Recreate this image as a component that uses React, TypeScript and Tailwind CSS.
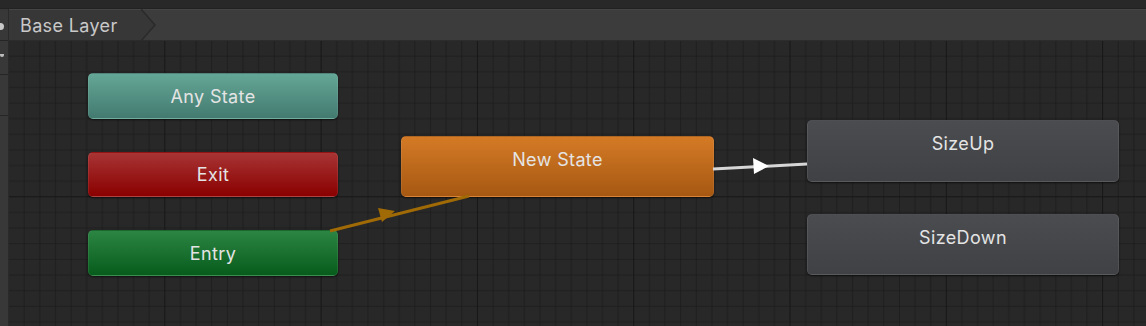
import React from 'react';

type Node = {
  label: string;
  x: number;
  y: number;
  w: number;
  h: number;
  tone: string;
  align: 'center' | 'top';
};

const nodes: Node[] = [
  { label: 'Any State', x: 79, y: 32, w: 250, h: 46, tone: 'bg-[linear-gradient(#64a796,#437a70)]', align: 'center' },
  { label: 'Exit', x: 79, y: 111, w: 250, h: 45, tone: 'bg-[linear-gradient(#a83434,#8a0000)]', align: 'center' },
  { label: 'Entry', x: 79, y: 189, w: 250, h: 46, tone: 'bg-[linear-gradient(#2c8543,#075c1c)]', align: 'center' },
  { label: 'New State', x: 392, y: 95, w: 313, h: 61, tone: 'bg-[linear-gradient(#d47a26,#a65812)]', align: 'top' },
  { label: 'SizeUp', x: 798, y: 79, w: 312, h: 62, tone: 'bg-[linear-gradient(#4b4c50,#404145)]', align: 'top' },
  { label: 'SizeDown', x: 798, y: 173, w: 312, h: 61, tone: 'bg-[linear-gradient(#4b4c50,#404145)]', align: 'top' },
];

function Grid() {
  const minor = 156.3 / 10;
  return (
    <svg className="absolute inset-0" width="1137" height="286">
      <defs>
        <pattern id="minor" width={minor} height={minor} patternUnits="userSpaceOnUse">
          <path d={`M ${minor} 0 V ${minor} M 0 ${minor} H ${minor}`} stroke="#1b1b1b" strokeWidth="1.5" fill="none" />
        </pattern>
        <pattern id="major" width="156.3" height="156.3" patternUnits="userSpaceOnUse">
          <rect width="156.3" height="156.3" fill="url(#minor)" />
          <path d="M 156.3 0 V 156.3 M 0 156.3 H 156.3" stroke="#161616" strokeWidth="2" fill="none" />
        </pattern>
      </defs>
      <rect width="100%" height="100%" fill="#282828" />
      <rect width="100%" height="100%" fill="url(#major)" />
    </svg>
  );
}

function Transitions() {
  return (
    <svg className="absolute inset-0 pointer-events-none" width="1137" height="286">
      {/* Entry -> New State */}
      <line x1="321" y1="190" x2="460" y2="155" stroke="#a06a06" strokeWidth="3" />
      <polygon points="369,167 386,170 373,181" fill="#a06a06" />
      {/* New State -> SizeUp */}
      <line x1="704" y1="128" x2="798" y2="123" stroke="#d6d6d6" strokeWidth="3" />
      <polygon points="744,117 760,125 745,133" fill="#ffffff" />
    </svg>
  );
}

export default function App() {
  return (
    <div
      className="w-[1146px] h-[326px] bg-[#282828] overflow-hidden flex flex-col"
      style={{ fontFamily: 'Inter, "Noto Sans", sans-serif' }}
    >
      <div className="h-[9px] bg-[#282828] border-b border-[#222]" />
      <div className="flex flex-1 min-h-0">
        <div className="w-[9px] bg-[#383838] border-r border-[#2a2a2a] flex flex-col">
          <div className="h-[32px] border-b border-[#262626] flex items-center">
            <div className="w-[5px] h-[7px] bg-[#c8c8c8] rounded-r-full -ml-[1px] mt-[4px]" />
          </div>
          <div className="h-[34px] border-b border-[#262626] flex items-start pt-[13px]">
            <div className="w-[4px] h-[3px] bg-[#bdbdbd] rounded-b-full" />
          </div>
          <div className="h-[41px] border-b border-[#262626]" />
          <div className="flex-1" />
        </div>
        <div className="flex-1 flex flex-col min-w-0">
          <div className="h-[32px] bg-[#3c3c3c] border-t border-[#454545] border-b border-b-[#2c2c2c] flex items-stretch relative">
            <div className="relative flex items-center pl-[11px] pr-[24px] bg-[#373737] text-[#c9c9c9] text-[18px] tracking-[0.02em]">
              Base Layer
              <svg className="absolute -right-[14px] top-[-1px]" width="15" height="32">
                <polygon points="0,0 14,16 0,32" fill="#373737" />
                <polyline points="0,0 14,16 0,32" fill="none" stroke="#2b2b2b" strokeWidth="1.5" />
              </svg>
            </div>
          </div>
          <div className="relative flex-1">
            <Grid />
            {nodes.map((n) => (
              <div
                key={n.label}
                className={`absolute rounded-[5px] ${n.tone} shadow-[0_1px_2px_rgba(0,0,0,0.6)] border border-[#ffffff14] text-[#e4e4e4] text-[18px] tracking-[0.02em] flex justify-center ${n.align === 'center' ? 'items-center' : 'items-start pt-[9px]'}`}
                style={{ left: n.x, top: n.y, width: n.w, height: n.h }}
              >
                {n.label}
              </div>
            ))}
            <Transitions />
          </div>
        </div>
      </div>
    </div>
  );
}
